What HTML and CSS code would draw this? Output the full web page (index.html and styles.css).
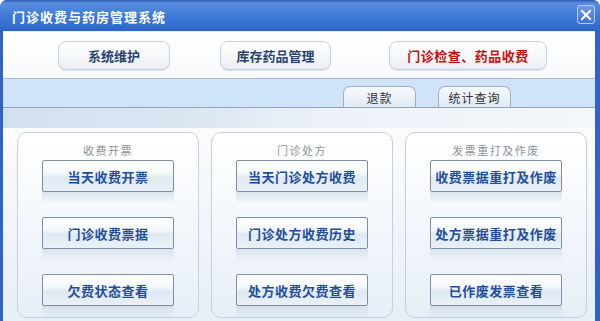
FILE: index.html
```html
<!DOCTYPE html>
<html lang="zh-CN">
<head>
    <meta charset="UTF-8">
    <title>门诊收费与药房管理系统</title>
    <link rel="stylesheet" href="styles.css">
</head>
<body>
    <div class="window">
        <div class="titlebar">
            <span class="title">门诊收费与药房管理系统</span>
            <span class="close">
                <svg width="12" height="12" viewBox="0 0 12 12"><path d="M2 2 L10 10 M10 2 L2 10" stroke="#fff" stroke-width="2" stroke-linecap="square"/></svg>
            </span>
        </div>
        <div class="content">
            <div class="topnav">
                <div class="nav-btn nav-first">系统维护</div>
                <div class="nav-btn nav-second">库存药品管理</div>
                <div class="nav-btn nav-active">门诊检查、药品收费</div>
            </div>
            <div class="tabband">
                <div class="tab">退款</div>
                <div class="tab">统计查询</div>
            </div>
            <div class="strip"></div>
            <div class="groups">
                <div class="group">
                    <div class="group-title">收费开票</div>
                    <div class="item"><div class="btn">当天收费开票</div><div class="reflect"></div></div>
                    <div class="item"><div class="btn">门诊收费票据</div><div class="reflect"></div></div>
                    <div class="item"><div class="btn">欠费状态查看</div><div class="reflect"></div></div>
                </div>
                <div class="group">
                    <div class="group-title">门诊处方</div>
                    <div class="item"><div class="btn">当天门诊处方收费</div><div class="reflect"></div></div>
                    <div class="item"><div class="btn">门诊处方收费历史</div><div class="reflect"></div></div>
                    <div class="item"><div class="btn">处方收费欠费查看</div><div class="reflect"></div></div>
                </div>
                <div class="group">
                    <div class="group-title">发票重打及作废</div>
                    <div class="item"><div class="btn">收费票据重打及作废</div><div class="reflect"></div></div>
                    <div class="item"><div class="btn">处方票据重打及作废</div><div class="reflect"></div></div>
                    <div class="item"><div class="btn">已作废发票查看</div><div class="reflect"></div></div>
                </div>
            </div>
        </div>
    </div>
</body>
</html>
```

FILE: styles.css
```css
body {
    margin: 0;
    padding: 0;
    background: #fff;
    font-family: "Noto Sans CJK SC", "Liberation Sans", sans-serif;
}
.window {
    width: 600px;
    height: 321px;
    overflow: hidden;
    background: #2f63c6;
    border-radius: 7px 7px 0 0;
    display: flex;
    flex-direction: column;
}
.titlebar {
    height: 31px;
    flex: none;
    display: flex;
    align-items: center;
    justify-content: space-between;
    padding: 0 5px 0 12px;
    background: linear-gradient(#2a58b0 0px, #5b8ee0 3px, #4680da 12px, #3570d2 24px, #2c62c6 31px);
    border-radius: 7px 7px 0 0;
}
.title {
    color: #fff;
    font-size: 13px;
    font-weight: bold;
    letter-spacing: 1px;
    margin-top: 1px;
}
.close {
    width: 16px;
    height: 17px;
    display: flex;
    align-items: center;
    justify-content: center;
    border: 1px solid #b8d0f0;
    border-radius: 3px;
    background: linear-gradient(#6f9ae6, #3d72d6);
    margin-top: -2px;
}
.content {
    flex: 1;
    margin: 0 5px 0 3px;
    background: #fff;
    display: flex;
    flex-direction: column;
    border-top: 1px solid #e6eef8;
}
.topnav {
    display: flex;
    padding: 9px 0 8px 55px;
    background: linear-gradient(#fff, #f7f9fc);
}
.nav-btn {
    height: 27px;
    display: flex;
    align-items: center;
    justify-content: center;
    border: 1px solid #c8d0dc;
    border-radius: 8px;
    background: linear-gradient(#ffffff, #f4f6f9 60%, #e9edf2);
    color: #2a4470;
    font-size: 13px;
    font-weight: bold;
    box-shadow: 0 1px 1px rgba(150, 165, 185, 0.3);
}
.nav-first {
    width: 110px;
}
.nav-second {
    width: 109px;
    margin-left: 50px;
}
.nav-active {
    width: 156px;
    margin-left: 58px;
    color: #c81010;
    letter-spacing: 0.5px;
}
.tabband {
    height: 28px;
    display: flex;
    align-items: flex-end;
    padding-left: 340px;
    background: #cfe4f9;
    border-top: 1px solid #a9bccf;
    border-bottom: 1px solid #8ea4ba;
}
.tab {
    width: 71px;
    height: 20px;
    display: flex;
    align-items: center;
    justify-content: center;
    border: 1px solid #9cb0c6;
    border-bottom: none;
    border-radius: 7px 7px 0 0;
    background: linear-gradient(#f6f9fc, #dfe9f3);
    color: #333;
    font-size: 12px;
    letter-spacing: 1px;
    margin-right: 22px;
}
.strip {
    height: 20px;
    background: linear-gradient(90deg, #d3e1ef 0%, #d9e5f1 30%, #edf2f8 55%, #f3f6fa 100%);
}
.groups {
    display: flex;
    gap: 12px;
    padding: 4px 0 0 14px;
    flex: 1;
    background: linear-gradient(#fbfcfe, #e6eef6);
}
.group {
    width: 180px;
    height: 184px;
    border: 1px solid #c6cfdb;
    border-radius: 10px;
    background: linear-gradient(#ffffff, #f1f5fa 60%, #e6eef7);
    display: flex;
    flex-direction: column;
    align-items: center;
}
.group-title {
    color: #8c939c;
    font-size: 11px;
    letter-spacing: 1.5px;
    margin-top: 8px;
    height: 19px;
    line-height: 19px;
}
.item {
    display: flex;
    flex-direction: column;
    margin-bottom: 13px;
}
.btn {
    width: 130px;
    height: 30px;
    display: flex;
    align-items: center;
    justify-content: center;
    border: 1px solid #7f8ea2;
    border-radius: 2px;
    background: linear-gradient(#ffffff 0%, #f5f8fb 40%, #e0e9f3 55%, #e9f0f7 100%);
    color: #1f4f98;
    font-size: 13px;
    font-weight: bold;
    letter-spacing: 0.5px;
    white-space: nowrap;
}
.reflect {
    width: 132px;
    height: 12px;
    background: linear-gradient(rgba(205, 218, 232, 0.7), rgba(240, 245, 250, 0));
}
```
